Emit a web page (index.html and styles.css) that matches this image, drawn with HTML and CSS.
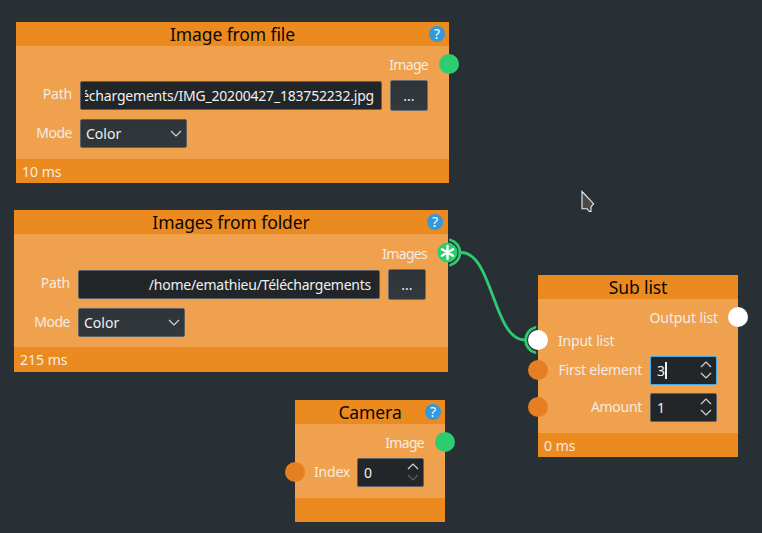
FILE: index.html
```html
<!DOCTYPE html>
<html lang="en">
<head>
<meta charset="utf-8">
<title>Node editor</title>
<link rel="stylesheet" href="styles.css">
</head>
<body>
<main class="canvas">
  <section class="node file-node">
    <header class="head"><h2>Image from file</h2><span class="help">?</span></header>
    <div class="body">
      <div class="out tight">Image</div>
      <div class="row path"><label>Path</label><div class="field text"><div class="clip"><span>échargements/IMG_20200427_183752232.jpg</span></div></div><button class="browse">...</button></div>
      <div class="row"><label class="mode">Mode</label><div class="field select"><span>Color</span><svg width="12" height="7" viewBox="0 0 12 7"><path d="M1 1l5 5 5-5"/></svg></div></div>
    </div>
    <footer class="foot">10 ms</footer>
    <i class="port green p-file"></i>
  </section>

  <section class="node folder-node">
    <header class="head"><h2>Images from folder</h2><span class="help">?</span></header>
    <div class="body">
      <div class="out tight">Images</div>
      <div class="row path"><label>Path</label><div class="field text"><div class="clip"><span>/home/emathieu/Téléchargements</span></div></div><button class="browse">...</button></div>
      <div class="row"><label class="mode">Mode</label><div class="field select"><span>Color</span><svg width="12" height="7" viewBox="0 0 12 7"><path d="M1 1l5 5 5-5"/></svg></div></div>
    </div>
    <footer class="foot">215 ms</footer>
  </section>

  <section class="node camera-node">
    <header class="head"><h2>Camera</h2><span class="help">?</span></header>
    <div class="body">
      <div class="out tight">Image</div>
      <div class="row"><label>Index</label><div class="field spin"><span>0</span><svg width="12" height="19" viewBox="0 0 12 19"><path d="M1 6l5-5 5 5"/><path class="dim" d="M1 12l5 5 5-5"/></svg></div></div>
    </div>
    <footer class="foot"></footer>
    <i class="port green p-cam-out"></i>
    <i class="port orange p-cam-in"></i>
  </section>

  <section class="node list-node">
    <header class="head"><h2>Sub list</h2></header>
    <div class="body">
      <div class="out">Output list</div>
      <div class="in">Input list</div>
      <div class="row first"><label>First element</label><div class="field spin focus"><span class="typed">3</span><svg width="12" height="19" viewBox="0 0 12 19"><path d="M1 6l5-5 5 5"/><path d="M1 12l5 5 5-5"/></svg></div></div>
      <div class="row"><label class="amount">Amount</label><div class="field spin"><span>1</span><svg width="12" height="19" viewBox="0 0 12 19"><path d="M1 6l5-5 5 5"/><path d="M1 12l5 5 5-5"/></svg></div></div>
    </div>
    <footer class="foot">0 ms</footer>
    <i class="port white p-list-out"></i>
    <i class="port white p-list-in"></i>
    <i class="port orange p-first"></i>
    <i class="port orange p-amount"></i>
  </section>

  <svg class="wires" width="762" height="533" viewBox="0 0 762 533">
    <g fill="none" stroke="#2ecc71" stroke-width="2.8" stroke-linecap="round">
      <path d="M450.5 240A13 13 0 0 1 450.5 265"/>
      <path d="M461 252.5C493 252.5 493 340 525 340"/>
      <path d="M535 327.5A13 13 0 0 0 535 352.5"/>
    </g>
    <circle cx="447.5" cy="252.5" r="10" fill="#2ecc71"/>
    <path d="M447.5 246v13M441.9 249.25l11.2 6.5M441.9 255.75l11.2-6.5" stroke="#fff" stroke-width="2.4" stroke-linecap="round"/>
    <path d="M582 191.5v17.2h5.2l2 2.8h1.8v-4.6l2.6-3.2z" fill="#4b4845" stroke="#eee" stroke-width="1.1"/>
  </svg>
</main>
</body>
</html>
```
FILE: styles.css
```css
* { box-sizing: border-box; }

body {
  margin: 0;
  background: #283036;
  color: #f3ece4;
  font: 14px/20px "Noto Sans", sans-serif;
}

.canvas {
  position: relative;
  width: 762px;
  height: 533px;
  overflow: hidden;
}

/* Nodes sit at free positions on the canvas */
.node {
  position: absolute;
  display: flex;
  flex-direction: column;
  background: #efa14d;
}
.file-node { left: 16px; top: 22px; width: 433px; height: 161px; }
.folder-node { left: 14px; top: 210px; width: 434px; height: 162px; }
.camera-node { left: 295px; top: 400px; width: 150px; height: 122px; }
.list-node { left: 538px; top: 275px; width: 200px; height: 182px; }

.head {
  position: relative;
  height: 24px;
  background: #eb8b1f;
  text-align: center;
}
.head h2 {
  margin: 0;
  color: #0b0703;
  font-size: 17.5px;
  font-weight: 400;
  line-height: 25px;
  letter-spacing: -0.1px;
  white-space: nowrap;
}
.help {
  position: absolute;
  right: 4px;
  top: 4px;
  width: 16px;
  height: 16px;
  border-radius: 50%;
  background: #3498db;
  color: #fff;
  font-size: 14px;
  line-height: 16px;
}
.folder-node .help { right: 5px; }

.body { flex: 1; }
.folder-node .body { padding-top: 1px; }
.out {
  height: 34px;
  padding: 9px 20px 0 0;
  letter-spacing: -0.1px;
  text-align: right;
}
.tight { padding-right: 21px; letter-spacing: -0.7px; }
.row {
  display: flex;
  height: 29px;
}
.row label {
  width: 56px;
  margin-right: 8px;
  line-height: 27px;
  letter-spacing: -0.2px;
  text-align: right;
  white-space: nowrap;
}
.row .mode { letter-spacing: -0.5px; }
.row .amount { letter-spacing: -0.3px; }
.path { height: 31px; margin-bottom: 8px; }
.path label { line-height: 28px; }

.field {
  display: flex;
  align-items: center;
  height: 29px;
  border: 1px solid #5b6064;
  border-radius: 2px;
  background: #222629;
  color: #eff0f1;
  white-space: nowrap;
}
.text {
  width: 302px;
  margin: 1px 8px 0 0;
  padding: 0 7px 0 4px;
  letter-spacing: -0.2px;
}
.folder-node .text { padding-right: 8px; letter-spacing: -0.24px; }
.clip {
  display: flex;
  flex: 1;
  justify-content: flex-end;
  min-width: 0;
  overflow: hidden;
}
.clip span { flex: none; }
.select {
  justify-content: space-between;
  width: 107px;
  padding: 0 4px 0 5px;
  background: linear-gradient(#2f3438, #32373b);
}
.field svg, .wires { overflow: visible; }
.field svg path {
  fill: none;
  stroke: #d5d7d8;
  stroke-width: 1.2;
}
.field svg .dim { stroke: #606467; }
.browse {
  width: 38px;
  height: 31px;
  padding: 0;
  border: 1px solid #6b6e70;
  border-radius: 2px;
  background: linear-gradient(#2f3438, #33383c);
  color: #eff0f1;
  font: 14px/20px "Noto Sans", sans-serif;
}
.spin {
  justify-content: space-between;
  width: 67px;
  padding: 0 4px 0 6px;
}
.focus { border-color: #3daee9; }
.typed {
  display: inline-block;
  height: 17px;
  border-right: 2px solid #eff0f1;
  line-height: 18px;
}
.in { height: 23px; padding-left: 20px; line-height: 16px; letter-spacing: -0.2px; }
.first { margin-bottom: 8px; }
.list-node .row label { width: 104px; }
.camera-node .row label { width: 55px; margin-right: 7px; }

.foot {
  height: 24px;
  padding-left: 6px;
  background: #eb8b1f;
  line-height: 26px;
}
.folder-node .foot { height: 25px; }

.port {
  position: absolute;
  z-index: 2;
  width: 20px;
  height: 20px;
  border-radius: 50%;
}
.green { background: #2ecc71; }
.orange { background: #e67e22; }
.white { background: #fff; }
.p-file { left: 423px; top: 32px; }
.p-cam-out { left: 140px; top: 32px; }
.p-cam-in { left: -10px; top: 62px; }
.p-list-out { left: 190px; top: 32px; }
.p-list-in { left: -10px; top: 55px; }
.p-first { left: -10px; top: 85px; }
.p-amount { left: -10px; top: 122px; }

.wires {
  position: absolute;
  inset: 0;
}
```
